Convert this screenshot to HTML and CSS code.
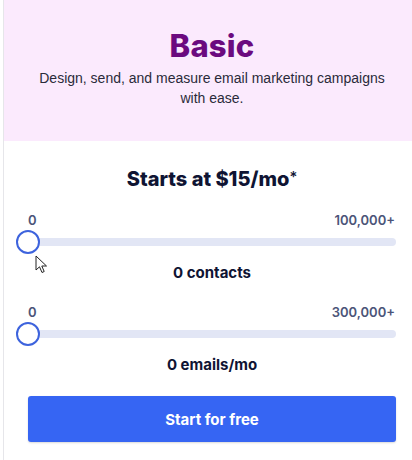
FILE: index.html
```html
<!DOCTYPE html>
<html>
<head>
<meta charset="utf-8">
<link rel="stylesheet" href="styles.css">
</head>
<body>
<div class="card">
  <div class="head">
    <h1 class="title">Basic</h1>
    <p class="desc">Design, send, and measure email marketing campaigns with ease.</p>
  </div>
  <div class="body">
    <div class="price">Starts at $15/mo<span class="ast">*</span></div>
    <div class="slider">
      <div class="labels"><span>0</span><span>100,000+</span></div>
      <div class="track"><span class="thumb"></span>
        <svg class="cursor" width="14" height="20" viewBox="0 0 14 20"><path d="M1 1 L1 15 L4.5 11.8 L7 17.5 L9.2 16.5 L6.8 11 L11.5 11 Z" fill="#fff" stroke="#222" stroke-width="1" stroke-linejoin="round"/></svg>
      </div>
      <div class="value">0 contacts</div>
    </div>
    <div class="slider">
      <div class="labels"><span>0</span><span>300,000+</span></div>
      <div class="track"><span class="thumb"></span></div>
      <div class="value">0 emails/mo</div>
    </div>
    <button class="cta">Start for free</button>
  </div>
</div>
</body>
</html>
```
FILE: styles.css
```css
html, body { margin: 0; padding: 0; background: #fff; overflow: hidden; }
body { width: 412px; height: 460px; }
.card {
  margin-left: 3px;
  width: 416px;
  min-height: 460px;
  border-left: 1px solid #e6e6ea;
  font-family: Inter, "Noto Sans", sans-serif;
  color: #0f1433;
}
.head {
  background: #fbeafd;
  height: 141px;
  box-sizing: border-box;
  padding-top: 27px;
  text-align: center;
}
.title {
  margin: 0;
  font-size: 31px;
  line-height: 38px;
  font-weight: 800;
  color: #6b0a7f;
  letter-spacing: 0.2px;
}
.desc {
  margin: 3px auto 0;
  width: 360px;
  font-family: "Liberation Sans", Arial, sans-serif;
  font-size: 14px;
  line-height: 20px;
  color: #2a2a3a;
}
.body {
  padding: 24px 24px 0 24px;
}
.price {
  text-align: center;
  font-size: 20px;
  font-weight: 800;
  line-height: 24px;
  margin-bottom: 21px;
}
.ast { font-weight: 500; font-size: 15px; vertical-align: 4px; }
.slider { margin-bottom: 21px; }
.labels {
  display: flex;
  justify-content: space-between;
  font-size: 13px;
  font-weight: 600;
  color: #4b5478;
  line-height: 16px;
  padding: 0 1px 0 0;
}
.track {
  position: relative;
  margin-top: 10px;
  height: 8px;
  border-radius: 4px;
  background: #e2e6f5;
}
.thumb {
  position: absolute;
  left: -12px;
  top: -8px;
  width: 20px;
  height: 20px;
  border-radius: 50%;
  background: #fff;
  border: 2px solid #3d63dd;
}
.cursor { position: absolute; left: 7px; top: 17px; }
.value {
  text-align: center;
  font-size: 15px;
  font-weight: 700;
  line-height: 20px;
  margin-top: 17px;
}
.cta {
  display: block;
  width: 100%;
  height: 46px;
  margin-top: 16px;
  border: none;
  border-radius: 3px;
  background: #3665f3;
  color: #fff;
  font-family: Inter, sans-serif;
  font-size: 15px;
  font-weight: 700;
  box-shadow: 0 1px 2px rgba(0,0,0,0.15);
}
```
